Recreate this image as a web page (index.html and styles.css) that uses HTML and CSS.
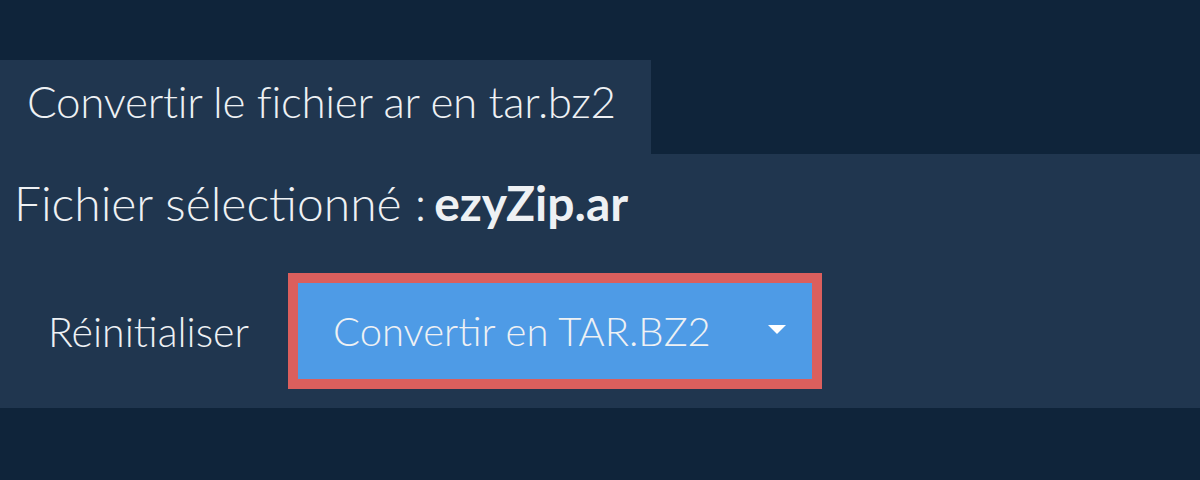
FILE: index.html
```html
<!DOCTYPE html>
<html lang="fr">
<head>
<meta charset="utf-8">
<link rel="stylesheet" href="styles.css">
</head>
<body>
<div class="page">
  <div class="tab">Convertir le fichier ar en tar.bz2</div>
  <div class="panel">
    <div class="selected">Fichier sélectionné : <strong>ezyZip.ar</strong></div>
    <div class="actions">
      <span class="reset">Réinitialiser</span>
      <div class="convert-wrap">
        <div class="convert">
          <span class="convert-label">Convertir en TAR.BZ2</span>
          <span class="caret"></span>
        </div>
      </div>
    </div>
  </div>
</div>
</body>
</html>
```

FILE: styles.css
```css
html, body {
  margin: 0;
  padding: 0;
  background: #0f243a;
  font-family: "Lato", "Noto Sans", sans-serif;
  color: #eef1f4;
}
.page {
  padding-top: 60px;
  width: 1200px;
  height: 480px;
  box-sizing: border-box;
}
.tab {
  display: inline-flex;
  align-items: center;
  box-sizing: border-box;
  height: 94px;
  width: 651px;
  padding-left: 27px;
  padding-bottom: 12px;
  background: #20364f;
  font-size: 44px;
  font-weight: 300;
  letter-spacing: -0.3px;
  white-space: nowrap;
}
.panel {
  background: #20364f;
  height: 254px;
  box-sizing: border-box;
  display: flex;
  flex-direction: column;
}
.selected {
  padding-left: 14px;
  height: 96px;
  display: flex;
  align-items: center;
  font-size: 48px;
  font-weight: 300;
}
.selected strong {
  font-weight: 700;
  margin-left: 8px;
}
.actions {
  display: flex;
  align-items: center;
  padding-left: 48px;
  margin-top: 23px;
}
.reset {
  font-size: 41px;
  font-weight: 300;
  width: 240px;
}
.convert-wrap {
  border: 10px solid #db5f5d;
}
.convert {
  background: #4e9be6;
  width: 514px;
  height: 96px;
  display: flex;
  align-items: center;
  box-sizing: border-box;
  padding-left: 35px;
  font-size: 40px;
  font-weight: 300;
}
.convert-label {
  flex: 1;
}
.caret {
  width: 0;
  height: 0;
  border-left: 9px solid transparent;
  border-right: 9px solid transparent;
  border-top: 9px solid #ffffff;
  margin-right: 26px;
  margin-top: -4px;
}
```
